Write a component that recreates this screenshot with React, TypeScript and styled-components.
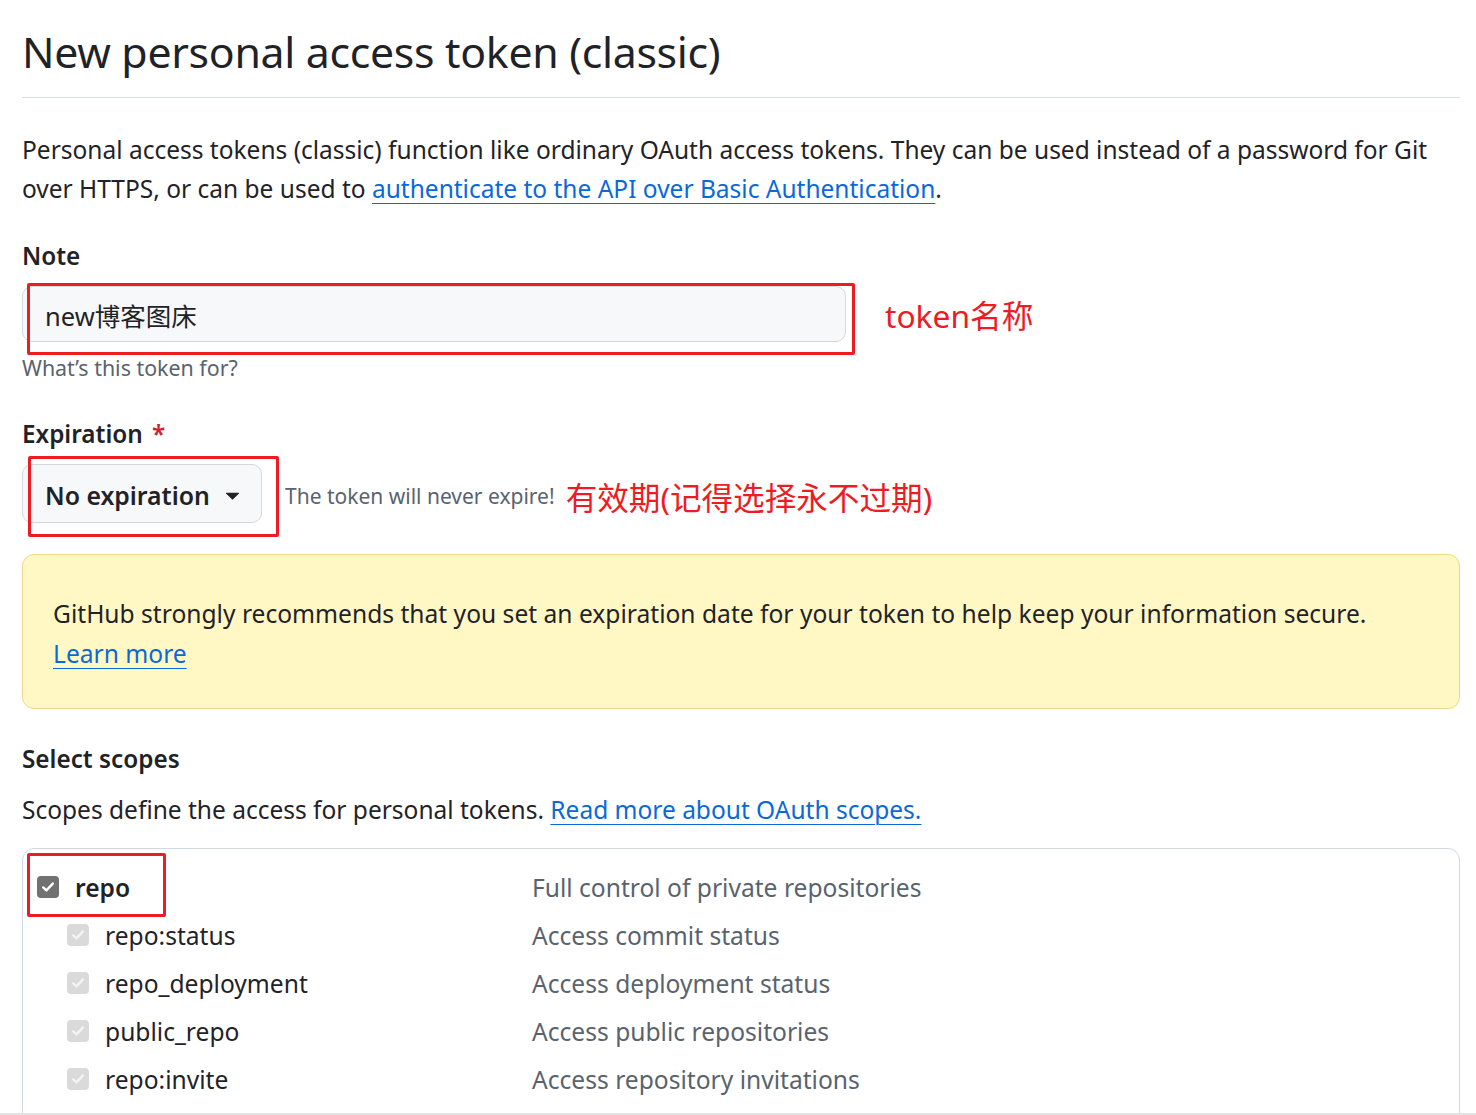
import React from 'react';
import styled, {createGlobalStyle} from "styled-components";

const Global = createGlobalStyle`
  body {
    margin: 0;
    background: #ffffff;
    font-family: "Noto Sans", "Noto Sans CJK SC", sans-serif;
    color: #1f2328;
  }
`

type ScopePropsType = {
    name: string;
    text: string;
    sub?: boolean;
}

const Check = (props: {sub?: boolean}) => {
    return (
        <CheckBox sub={props.sub}>
            <svg width="16" height="16" viewBox="0 0 16 16">
                <path d="M3.2 8.4 6.4 11.4 12.8 4.6" fill="none" strokeWidth="2.4"
                      strokeLinecap="round" strokeLinejoin="round"/>
            </svg>
        </CheckBox>
    );
};

const Scope = (props: ScopePropsType) => {
    return (
        <ScopeRow>
            <ScopeName sub={props.sub}>
                <Check sub={props.sub}/>
                <ScopeLabel sub={props.sub}>{props.name}</ScopeLabel>
                {!props.sub && <Mark/>}
            </ScopeName>
            <ScopeText>{props.text}</ScopeText>
        </ScopeRow>
    );
};

const scopes = [
    {name: "repo:status", text: "Access commit status"},
    {name: "repo_deployment", text: "Access deployment status"},
    {name: "public_repo", text: "Access public repositories"},
    {name: "repo:invite", text: "Access repository invitations"},
];

export default function App() {
    return (
        <Page>
            <Global/>
            <Title>New personal access token (classic)</Title>

            <Intro>
                Personal access tokens (classic) function like ordinary OAuth access tokens. They can be used instead of a password for Git<br/>
                over HTTPS, or can be used to <Link href="#">authenticate to the API over Basic Authentication</Link>.
            </Intro>

            <Label>Note</Label>
            <FieldRow>
                <InputWrap>
                    <Input defaultValue="new博客图床"/>
                    <Frame/>
                </InputWrap>
                <Hint>token名称</Hint>
            </FieldRow>
            <Note>What’s this token for?</Note>

            <Label top={38}>Expiration <Required>*</Required></Label>
            <SelectRow>
                <SelectWrap>
                    <Select>
                        No expiration
                        <svg width="29" height="29" viewBox="0 0 16 16">
                            <path fill="#1f2328"
                                  d="m4.427 7.427 3.396 3.396a.25.25 0 0 0 .354 0l3.396-3.396A.25.25 0 0 0 11.396 7H4.604a.25.25 0 0 0-.177.427Z"/>
                        </svg>
                    </Select>
                    <Frame/>
                </SelectWrap>
                <SelectNote>The token will never expire!</SelectNote>
                <Hint>有效期(记得选择永不过期)</Hint>
            </SelectRow>

            <Flash>
                GitHub strongly recommends that you set an expiration date for your token to help keep your information secure.
                <br/>
                <Link href="#">Learn more</Link>
            </Flash>

            <Label top={35}>Select scopes</Label>
            <ScopesText>
                Scopes define the access for personal tokens. <Link href="#">Read more about OAuth scopes.</Link>
            </ScopesText>

            <ScopesBox>
                <Scope name="repo" text="Full control of private repositories"/>
                {scopes.map(s => <Scope key={s.name} name={s.name} text={s.text} sub/>)}
            </ScopesBox>
        </Page>
    );
}

const Page = styled.div`
  height: 1115px;
  box-sizing: border-box;
  overflow: hidden;
  padding: 27px 16px 0 22px;
  border-bottom: 2px solid #e3e3e3;
`

const Title = styled.h1`
  margin: 0;
  padding-bottom: 20px;
  font-size: 42.8px;
  line-height: 50px;
  font-weight: 400;
  border-bottom: 1px solid #d8dee4;
  letter-spacing: -0.3px;
`

const Intro = styled.p`
  margin: 32px 0 0;
  font-size: 24.5px;
  line-height: 39px;
  white-space: nowrap;
`

const Link = styled.a`
  color: #0969da;
  text-decoration: underline;
  text-underline-offset: 5px;
  text-decoration-thickness: 1px;
`

const Label = styled.div<{ top?: number }>`
  margin-top: ${props => props.top ?? 33}px;
  font-size: 24.3px;
  line-height: 30px;
  font-weight: 600;
`

const Required = styled.span`
  margin-left: 3px;
  color: #cf222e;
`

const FieldRow = styled.div`
  display: flex;
  align-items: center;
  margin-top: 15px;
`

const InputWrap = styled.div`
  position: relative;
  width: 824px;
`

const Input = styled.input`
  display: block;
  width: 100%;
  height: 56px;
  box-sizing: border-box;
  padding: 0 22px;
  font-family: inherit;
  font-size: 25.5px;
  color: #1f2328;
  background: #f6f8fa;
  border: 1px solid #d1d9e0;
  border-radius: 10px;
  outline: none;
`

const Frame = styled.span`
  position: absolute;
  left: 5px;
  top: -3px;
  right: -9px;
  bottom: -13px;
  border: 3px solid #ed1c24;
  border-radius: 2px;
  pointer-events: none;
`

const Hint = styled.span`
  margin-left: 39px;
  font-size: 31.7px;
  color: #ed1c24;
  white-space: nowrap;
`

const Note = styled.div`
  margin-top: 13px;
  font-size: 21.4px;
  line-height: 26px;
  color: #59636e;
`

const SelectRow = styled.div`
  display: flex;
  align-items: center;
  margin-top: 15px;

  ${Hint} {
    margin-left: 11px;
    margin-top: 4px;
    font-size: 31.6px;
  }
`

const SelectWrap = styled.div`
  position: relative;

  ${Frame} {
    left: 6px;
    top: -8px;
    right: -17px;
    bottom: -14px;
  }
`

const Select = styled.div`
  display: flex;
  align-items: center;
  gap: 6px;
  width: 240px;
  height: 59px;
  box-sizing: border-box;
  padding: 2px 14px 0 22px;
  font-size: 24.8px;
  font-weight: 600;
  background: #f6f8fa;
  border: 1px solid #d1d9e0;
  border-radius: 10px;

  svg {
    margin-left: auto;
  }
`

const SelectNote = styled.span`
  margin-left: 23px;
  margin-top: 4px;
  font-size: 21px;
  color: #59636e;
  white-space: nowrap;
`

const Flash = styled.div`
  margin-top: 31px;
  padding: 39px 30px 34px;
  font-size: 24.6px;
  line-height: 40px;
  background: #fff8c5;
  border: 1px solid #eed888;
  border-radius: 12px;
`

const ScopesText = styled.div`
  margin-top: 21px;
  font-size: 24.5px;
  line-height: 30px;
`

const ScopesBox = styled.div`
  margin-top: 23px;
  padding: 14px 14px 60px;
  border: 1px solid #d1d9e0;
  border-radius: 12px;
`

const ScopeRow = styled.div`
  display: grid;
  grid-template-columns: 495px 1fr;
  align-items: center;
  height: 48px;
`

const ScopeName = styled.div<{ sub?: boolean }>`
  position: relative;
  display: flex;
  align-items: center;
  gap: 16px;
  padding-left: ${props => props.sub ? 30 : 0}px;
`

const ScopeLabel = styled.span<{ sub?: boolean }>`
  font-size: 24.6px;
  font-weight: ${props => props.sub ? 400 : 600};
`

const ScopeText = styled.span`
  font-size: 24.6px;
  color: #59636e;
`

const CheckBox = styled.span<{ sub?: boolean }>`
  display: inline-flex;
  align-items: center;
  justify-content: center;
  width: 22px;
  height: 22px;
  border-radius: 4px;
  background: ${props => props.sub ? "#dadada" : "#717171"};

  svg path {
    stroke: ${props => props.sub ? "#f3f3f3" : "#ffffff"};
  }
`

const Mark = styled.span`
  position: absolute;
  left: -10px;
  top: -18px;
  width: 133px;
  height: 58px;
  border: 3px solid #ed1c24;
  border-radius: 2px;
`
